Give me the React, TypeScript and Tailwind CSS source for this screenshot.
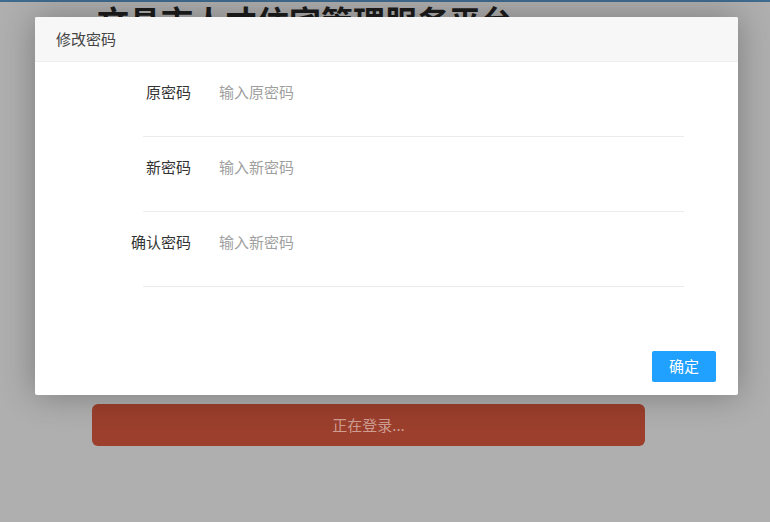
import React, { useState } from "react";

const fields = [
  { label: "原密码", name: "oldPwd", placeholder: "输入原密码" },
  { label: "新密码", name: "newPwd", placeholder: "输入新密码" },
  { label: "确认密码", name: "confirmPwd", placeholder: "输入新密码" },
];

const App: React.FC = () => {
  const [form, setForm] = useState<Record<string, string>>({
    oldPwd: "",
    newPwd: "",
    confirmPwd: "",
  });

  const handleChange = (e: React.ChangeEvent<HTMLInputElement>) => {
    setForm({ ...form, [e.target.name]: e.target.value });
  };

  return (
    <div
      className="relative w-[770px] h-[522px] overflow-hidden bg-[#afafaf]"
      style={{ fontFamily: '"Noto Sans CJK SC", "Noto Sans", sans-serif' }}
    >
      {/* page behind the mask */}
      <div className="h-[2px] bg-[#3f6b8e]" />
      <div className="pl-[97px]">
        <h1 className="text-[32px] leading-[36px] font-bold text-[#1c1c1c] whitespace-nowrap">
          文昌市人才住宅管理服务平台
        </h1>
      </div>
      <div className="mt-[366px] ml-[92px] w-[553px] h-[42px] rounded-md bg-[#9c3f2d] flex items-center justify-center text-[15px] text-[#cf9d92]">
        正在登录...
      </div>

      {/* DIALOG */}
      <div className="absolute left-[35px] top-[17px] w-[703px] h-[378px] bg-white rounded-[2px] shadow-[0_0_34px_rgba(0,0,0,0.3)] flex flex-col">
        <div className="h-[45px] shrink-0 bg-[#f7f7f7] border-b border-[#ededed] flex items-center pl-[21px] text-[15px] text-[#444] rounded-t-[2px]">
          修改密码
        </div>

        <div className="pl-[108px] pr-[54px]">
          {fields.map((f) => (
            <div
              key={f.name}
              className="flex items-center h-[75px] pt-[20px] pb-[33px] border-b border-[#ececec]"
            >
              <label className="w-[48px] shrink-0 flex justify-end whitespace-nowrap text-[15px] text-[#333]">
                {f.label}
              </label>
              <input
                type="password"
                name={f.name}
                value={form[f.name]}
                onChange={handleChange}
                placeholder={f.placeholder}
                className="ml-[28px] flex-1 h-[22px] outline-none bg-transparent text-[15px] text-[#333] placeholder:text-[#9f9f9f]"
              />
            </div>
          ))}
        </div>

        <div className="flex-1 flex items-end justify-end pr-[22px] pb-[13px]">
          <button className="w-[64px] h-[31px] rounded-[2px] bg-[#20a0ff] text-white text-[15px]">
            确定
          </button>
        </div>
      </div>
    </div>
  );
};

export default App;
